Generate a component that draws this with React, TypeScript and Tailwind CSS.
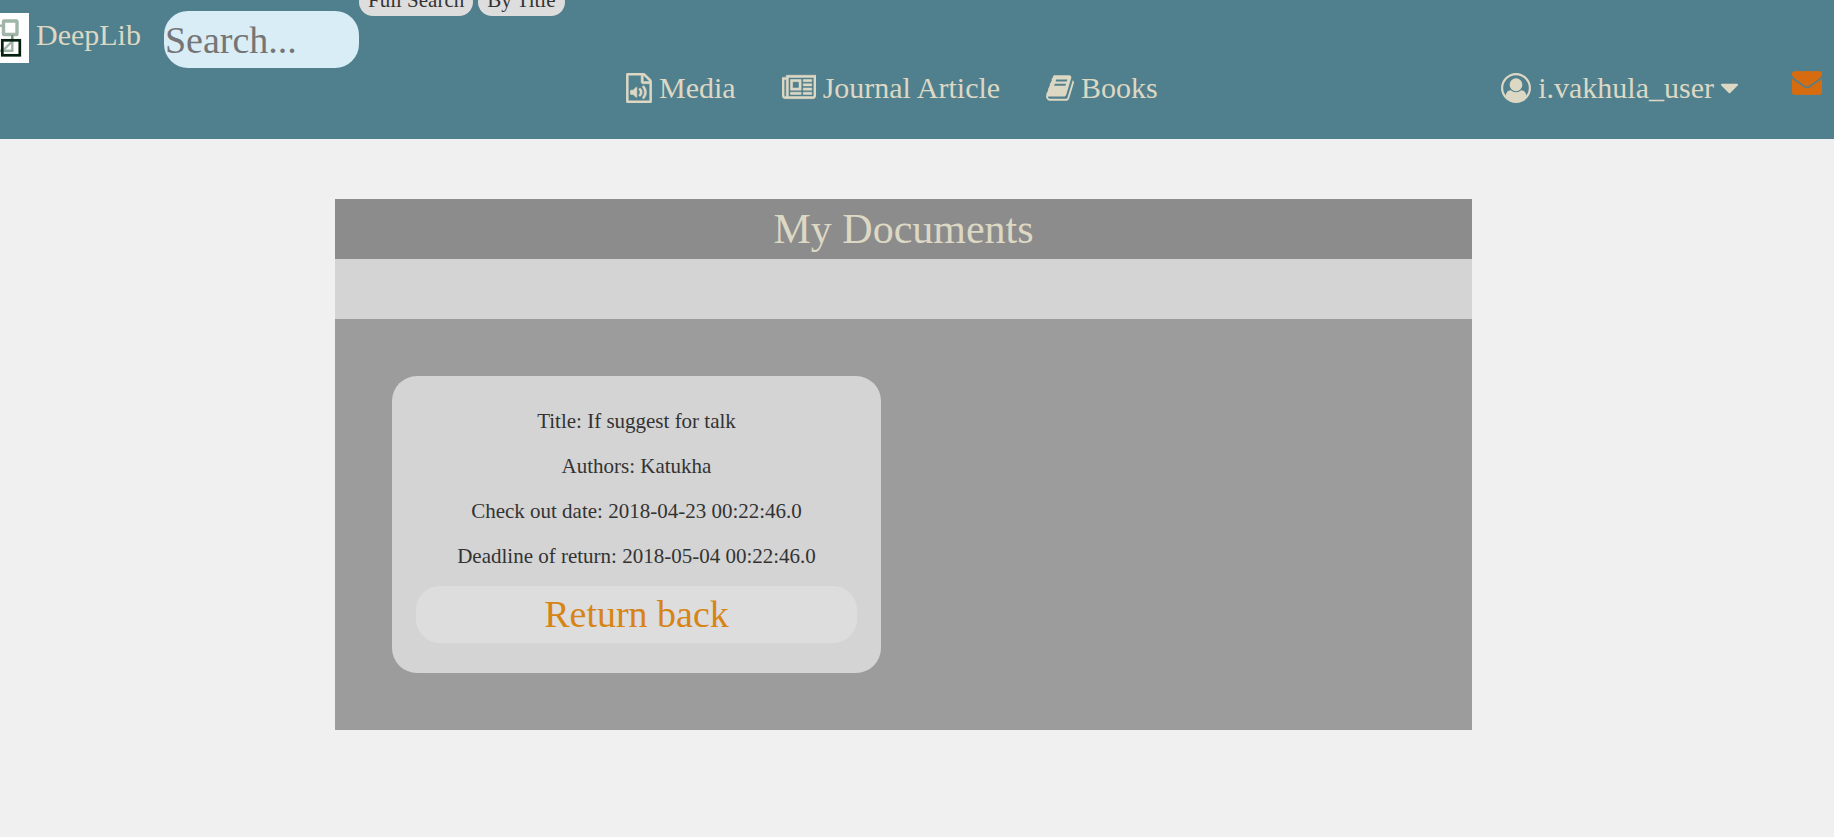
import type { ReactNode } from "react";

type IconProps = { viewBox: string; className: string; d: string; weight?: number };

function Icon({ viewBox, className, d, weight = 0 }: IconProps) {
  return (
    <svg
      viewBox={viewBox}
      className={className}
      fill="currentColor"
      stroke="currentColor"
      strokeWidth={weight}
      aria-hidden="true"
    >
      <path d={d} />
    </svg>
  );
}

const AUDIO =
  "M1596 380q28 28 48 76t20 88v1152q0 40-28 68t-68 28h-1344q-40 0-68-28t-28-68v-1600q0-40 28-68t68-28h896q40 0 88 20t76 48zm-444-244v376h376q-10-29-22-41l-313-313q-12-12-41-22zm384 1528v-1024h-416q-40 0-68-28t-28-68v-416h-768v1536h1280zm-788-814q20 8 20 30v544q0 22-20 30-8 2-12 2-12 0-23-9l-166-167h-131q-14 0-23-9t-9-23v-192q0-14 9-23t23-9h131l166-167q16-15 35-7zm417 689q31 0 50-24 129-159 129-363t-129-363q-16-21-43-24t-47 14q-21 17-23.5 43.5t14.5 47.5q100 123 100 282t-100 282q-17 21-14.5 47.5t23.5 42.5q18 15 40 15zm-211-148q27 0 47-20 87-93 87-219t-87-219q-18-19-45-20t-46 17-20 44.5 18 46.5q52 57 52 131t-52 131q-19 20-18 46.5t20 44.5q20 17 44 17z";
const NEWSPAPER =
  "M1024 512h-384v384h384v-384zm128 640v128h-640v-128h640zm0-768v640h-640v-640h640zm640 768v128h-512v-128h512zm0-256v128h-512v-128h512zm0-256v128h-512v-128h512zm0-256v128h-512v-128h512zm-1536 960v-960h-128v960q0 26 19 45t45 19 45-19 19-45zm1664 0v-1088h-1536v1088q0 33-11 64h1483q26 0 45-19t19-45zm128-1216v1216q0 80-56 136t-136 56h-1664q-80 0-136-56t-56-136v-1088h256v-128h1792z";
const BOOK =
  "M1703 478q40 57 18 129l-275 906q-19 64-76.5 107.5t-122.5 43.5h-923q-77 0-148.5-53.5t-99.5-131.5q-24-67-2-127 0-4 3-27t4-37q1-8-3-21.5t-3-19.5q2-11 8-21t16.5-23.5 16.5-23.5q23-38 45-91.5t30-91.5q3-10 .5-30t-.5-28q3-11 17-28t17-23q21-36 42-92t25-90q1-9-2.5-32t.5-28q4-13 22-30.5t22-22.5q19-26 42.5-84.5t27.5-96.5q1-8-3-25.5t-2-26.5q2-8 9-18t18-23 17-21q8-12 16.5-30.5t15-35 16-36 19.5-32 26.5-23.5 36-11.5 47.5 5.5l-1 3q38-9 51-9h761q74 0 114 56t18 130l-274 906q-36 119-71.5 153.5t-128.5 34.5h-869q-27 0-38 15-11 16-1 43 24 70 144 70h923q29 0 56-15.5t35-41.5l300-987q7-22 5-57 38 15 59 43zm-1064 2q-4 13 2 22.5t20 9.5h608q13 0 25.5-9.5t16.5-22.5l21-64q4-13-2-22.5t-20-9.5h-608q-13 0-25.5 9.5t-16.5 22.5zm-83 256q-4 13 2 22.5t20 9.5h608q13 0 25.5-9.5t16.5-22.5l21-64q4-13-2-22.5t-20-9.5h-608q-13 0-25.5 9.5t-16.5 22.5z";
const USER =
  "M896 0q182 0 348 71t286 191 191 286 71 348q0 181-70.5 347t-190.5 286-286 191.5-349 71.5-349-71-285.5-191.5-190.5-286-71-347.5 71-348 191-286 286-191 348-71zm619 1351q149-205 149-455 0-156-61-298t-164-245-245-164-298-61-298 61-245 164-164 245-61 298q0 250 149 455 66-327 306-327 131 128 313 128t313-128q240 0 306 327zm-235-647q0-159-112.5-271.5t-271.5-112.5-271.5 112.5-112.5 271.5 112.5 271.5 271.5 112.5 271.5-112.5 112.5-271.5z";
const CARET =
  "M1408 704q0 26-19 45l-448 448q-19 19-45 19t-45-19l-448-448q-19-19-19-45t19-45 45-19h896q26 0 45 19t19 45z";
const ENVELOPE =
  "M1792 710v794q0 66-47 113t-113 47h-1472q-66 0-113-47t-47-113v-794q44 49 101 87 362 246 497 345 57 42 92.5 65.5t94.5 48 110 24.5h2q51 0 110-24.5t94.5-48 92.5-65.5q170-123 498-345 57-39 100-87zm0-294q0 79-49 151t-122 123q-376 261-468 325-10 7-42.5 31t-54 38.5-52 32.5-57.5 27-50 9h-2q-23 0-50-9t-57.5-27-52-32.5-54-38.5-42.5-31q-91-64-262-182.5t-205-142.5q-62-42-117-115.5t-55-136.5q0-78 41.5-130t118.5-52h1472q65 0 112.5 47t47.5 113z";

function Logo() {
  return (
    <svg viewBox="0 0 29 50" className="h-[50px] w-[29px] shrink-0" fill="none" aria-hidden="true">
      <rect width="29" height="50" fill="#fff" />
      <g stroke="#a0b5a7">
        <rect x="3.5" y="8" width="13.5" height="13.5" rx="0.5" strokeWidth="3.4" />
        <path d="M0 12.8h3M12.3 22v15.7H0M4 36.5l8-8" strokeWidth="2.4" />
      </g>
      <path d="M12.3 22v5" stroke="#6f8a7a" strokeWidth="2" />
      <rect x="2.3" y="27.3" width="17.5" height="15" stroke="#06200f" strokeWidth="2.7" />
    </svg>
  );
}

function NavLink({ icon, children }: { icon: ReactNode; children: ReactNode }) {
  return (
    <a href="#" className="flex items-center gap-[7px]">
      {icon}
      {children}
    </a>
  );
}

const details = [
  "Title: If suggest for talk",
  "Authors: Katukha",
  "Check out date: 2018-04-23 00:22:46.0",
  "Deadline of return: 2018-05-04 00:22:46.0",
];

export default function App() {
  return (
    <div className="min-h-screen overflow-x-hidden bg-[#f0f0f0] font-['Liberation_Serif',serif] text-[21px] leading-6 text-[#333]">
      <header className="overflow-hidden bg-[#50808e] pb-[34px] text-[30px] leading-[34px] text-[#ddd8c4]">
        <div className="flex items-start">
          <a href="#" className="mt-[13px] flex items-start gap-[7px]">
            <Logo />
            <span className="mt-[5px]">DeepLib</span>
          </a>
          <form className="ml-[23px] flex items-start">
            <input
              type="text"
              aria-label="Search"
              placeholder="Search..."
              className="mt-[11px] h-[57px] w-[195px] rounded-[24px] bg-[#d9edf7] px-px text-[38px] text-[#333] placeholder:text-[#757575]"
            />
            <div className="-mt-3 flex gap-[5px] text-[21px] leading-6 text-[#333]">
              <button type="button" className="rounded-[15px] bg-[#ddd] px-[9px] pb-1">
                Full Search
              </button>
              <button type="button" className="rounded-[15px] bg-[#ddd] px-[9px] pb-1">
                By Title
              </button>
            </div>
          </form>
        </div>
        <div className="mt-[3px] flex items-center pr-3 pl-[626px]">
          <nav className="flex gap-[46px]">
            <NavLink icon={<Icon viewBox="128 0 1536 1792" className="h-[30px] w-[26px]" d={AUDIO} weight={32} />}>
              Media
            </NavLink>
            <NavLink icon={<Icon viewBox="0 0 2048 1792" className="h-[30px] w-[34px]" d={NEWSPAPER} weight={32} />}>
              Journal Article
            </NavLink>
            <NavLink icon={<Icon viewBox="64 0 1664 1792" className="h-[30px] w-7" d={BOOK} />}>Books</NavLink>
          </nav>
          <button type="button" className="ml-auto flex items-center gap-[7px]">
            <Icon viewBox="0 0 1792 1792" className="size-[30px]" d={USER} />
            i.vakhula_user
            <Icon viewBox="384 0 1024 1792" className="h-[30px] w-[17px]" d={CARET} />
          </button>
          <a href="#" aria-label="Messages" className="ml-[54px] self-start">
            <Icon viewBox="0 256 1792 1408" className="h-6 w-[30px] text-[#d66c0f]" d={ENVELOPE} weight={32} />
          </a>
        </div>
      </header>

      <main className="mt-[60px] ml-[335px] w-[62%]">
        <h1 className="bg-[#8c8c8c] text-center text-[42px] leading-[60px] text-[#ddd8c4]">My Documents</h1>
        <div className="h-[60px] bg-[#d4d4d4]" />
        <section className="bg-[#9c9c9c] p-[57px]">
          <article className="flex w-[489px] flex-col gap-[21px] rounded-[25px] bg-[#d4d4d4] px-6 pt-[33px] pb-[30px] text-center">
            {details.map((line) => (
              <p key={line}>{line}</p>
            ))}
            <button
              type="button"
              className="-mt-[3px] h-[57px] rounded-[24px] bg-[#ddd] text-[38px] leading-[57px] text-[#d68515]"
            >
              Return back
            </button>
          </article>
        </section>
      </main>
    </div>
  );
}
